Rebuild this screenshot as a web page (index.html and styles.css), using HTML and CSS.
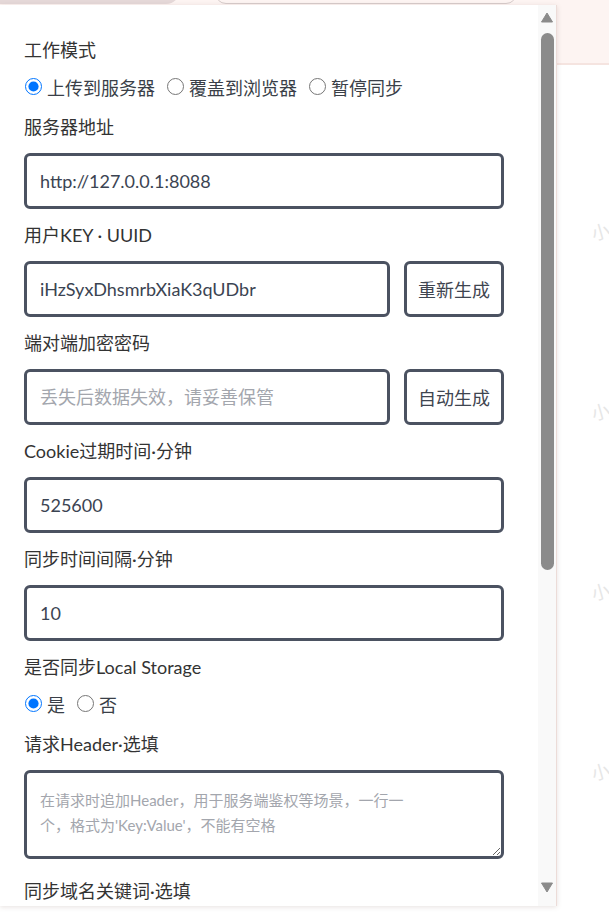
FILE: index.html
```html
<!DOCTYPE html>
<html lang="zh-CN">
<head>
  <meta charset="UTF-8" />
  <title>同步设置</title>
  <link rel="stylesheet" href="styles.css">
</head>
<body>
  <div class="page">
    <header class="top-bar">
      <div class="pill pill-filled"></div>
      <div class="pill pill-outline"></div>
    </header>

    <div class="watermarks">
      <div class="mark"><span class="mark-id"></span><span class="mark-name">小鱼</span></div>
      <div class="mark"><span class="mark-id"></span><span class="mark-name">小鱼</span></div>
      <div class="mark"><span class="mark-id"></span><span class="mark-name">小鱼</span></div>
      <div class="mark"><span class="mark-id"></span><span class="mark-name">小鱼</span></div>
      <div class="mark"><span class="mark-id"></span><span class="mark-name">小鱼</span></div>
      <div class="mark"><span class="mark-id"></span><span class="mark-name">小鱼</span></div>
      <div class="mark"><span class="mark-id"></span><span class="mark-name">小鱼</span></div>
      <div class="mark"><span class="mark-id"></span><span class="mark-name">小鱼</span></div>
      <div class="mark"><span class="mark-id"></span><span class="mark-name">小鱼</span></div>
      <div class="mark"><span class="mark-id"></span><span class="mark-name">小鱼</span></div>
      <div class="mark"><span class="mark-id"></span><span class="mark-name">小鱼</span></div>
      <div class="mark"><span class="mark-id"></span><span class="mark-name">小鱼</span></div>
      <div class="mark"><span class="mark-id"></span><span class="mark-name">小鱼</span></div>
      <div class="mark"><span class="mark-id"></span><span class="mark-name">小鱼</span></div>
      <div class="mark"><span class="mark-id"></span><span class="mark-name">小鱼</span></div>
      <div class="mark"><span class="mark-id"></span><span class="mark-name">小鱼</span></div>
      <div class="mark"><span class="mark-id">i623</span><span class="mark-name">小鱼</span></div>
      <div class="mark"><span class="mark-id">i623</span><span class="mark-name">小鱼</span></div>
      <div class="mark"><span class="mark-id">i623</span><span class="mark-name">小鱼</span></div>
      <div class="mark"><span class="mark-id"></span><span class="mark-name">小鱼</span></div>
    </div>

    <div class="popup">
      <form class="popup-body">
        <div class="field-label">工作模式</div>
        <div class="radio-row">
          <label class="radio"><input type="radio" name="mode" checked> 上传到服务器</label>
          <label class="radio"><input type="radio" name="mode"> 覆盖到浏览器</label>
          <label class="radio"><input type="radio" name="mode"> 暂停同步</label>
        </div>

        <div class="field-label">服务器地址</div>
        <input class="text-input" type="text" value="http://127.0.0.1:8088">

        <div class="field-label">用户KEY · UUID</div>
        <div class="input-row">
          <input class="text-input" type="text" value="iHzSyxDhsmrbXiaK3qUDbr">
          <button type="button" class="side-button">重新生成</button>
        </div>

        <div class="field-label">端对端加密密码</div>
        <div class="input-row">
          <input class="text-input" type="text" placeholder="丢失后数据失效，请妥善保管">
          <button type="button" class="side-button">自动生成</button>
        </div>

        <div class="field-label">Cookie过期时间·分钟</div>
        <input class="text-input" type="text" value="525600">

        <div class="field-label">同步时间间隔·分钟</div>
        <input class="text-input" type="text" value="10">

        <div class="field-label">是否同步Local Storage</div>
        <div class="radio-row">
          <label class="radio"><input type="radio" name="storage" checked> 是</label>
          <label class="radio"><input type="radio" name="storage"> 否</label>
        </div>

        <div class="field-label">请求Header·选填</div>
        <textarea class="text-area" placeholder="在请求时追加Header，用于服务端鉴权等场景，一行一&#10;个，格式为'Key:Value'，不能有空格"></textarea>

        <div class="field-label last-label">同步域名关键词·选填</div>
      </form>

      <div class="scrollbar">
        <svg class="arrow" width="12" height="11" viewBox="0 0 12 11"><path d="M6 1 L11.5 10 H0.5 Z" fill="#8b8b8b" stroke="#8b8b8b" stroke-linejoin="round"/></svg>
        <div class="thumb"></div>
        <svg class="arrow arrow-down" width="12" height="11" viewBox="0 0 12 11"><path d="M0.5 1 H11.5 L6 10 Z" fill="#8b8b8b" stroke="#8b8b8b" stroke-linejoin="round"/></svg>
      </div>
    </div>
  </div>
</body>
</html>
```

FILE: styles.css
```css
body {
  margin: 0;
  background-color: #fff;
  font-family: Lato, "Noto Sans CJK SC", sans-serif;
}

.page {
  position: relative;
  width: 609px;
  height: 922px;
  overflow: hidden;
}

/* page behind the popup */
.top-bar {
  height: 63px;
  background-color: #fdf4f2;
  border-bottom: 2px solid #f5e4e0;
  display: flex;
  align-items: flex-start;
  gap: 35px;
}

.pill {
  height: 20px;
  margin-top: -16px;
}

.pill-filled {
  width: 180px;
  background-color: #e5d8d8;
  border-radius: 0 0 14px 0;
}

.pill-outline {
  width: 300px;
  border: 1px solid #d6cbca;
  border-radius: 14px;
  margin-top: -18px;
}

.watermarks {
  display: grid;
  grid-template-columns: repeat(3, 195px) 1fr;
  grid-auto-rows: 180px;
  color: #e6e6e6;
  font-size: 20px;
  line-height: 24px;
}

.mark {
  display: flex;
  flex-direction: column;
  padding-top: 116px;
}

.mark-id {
  display: block;
  height: 24px;
  margin-left: -12px;
  transform: rotate(-16deg);
}

.mark-name {
  margin-top: 12px;
  margin-left: 6px;
  font-size: 18px;
  white-space: nowrap;
  transform: rotate(-16deg);
}

/* popup */
.popup {
  position: absolute;
  top: 5px;
  left: 0;
  width: 556px;
  height: 901px;
  display: flex;
  background-color: #fff;
  border-right: 1px solid #ecdcd8;
  box-shadow: 0 1px 5px rgba(120, 90, 80, 0.18);
}

.popup-body {
  flex: 1;
  overflow: hidden;
  padding: 32px 0 0 24px;
  display: flex;
  flex-direction: column;
  align-items: flex-start;
  gap: 13px;
  color: #333;
  font-size: 18px;
}

.field-label {
  line-height: 26px;
  white-space: nowrap;
}

.last-label {
  margin-top: 6px;
}

.radio-row {
  display: flex;
  align-items: center;
  gap: 11px;
  height: 25px;
  color: #3a3f48;
}

.radio {
  display: flex;
  align-items: center;
  gap: 5px;
  line-height: 25px;
  white-space: nowrap;
}

.radio input {
  width: 17px;
  height: 17px;
  margin: -4px 0 0 1px;
  accent-color: #0075ff;
}

.text-input,
.side-button,
.text-area {
  box-sizing: border-box;
  border: 3px solid #4b5261;
  border-radius: 6px;
  background-color: #fff;
  color: #3b4452;
  font-family: inherit;
  font-size: 18px;
  outline: none;
}

.text-input {
  width: 480px;
  height: 56px;
  padding: 0 13px;
}

.input-row {
  display: flex;
  gap: 14px;
}

.input-row .text-input {
  width: 366px;
}

.side-button {
  width: 100px;
  height: 56px;
  padding: 0;
  color: #3f4550;
}

.text-input::placeholder,
.text-area::placeholder {
  color: #a3a6ad;
}

.text-area {
  width: 480px;
  height: 89px;
  padding: 15px 13px;
  font-size: 15px;
  line-height: 25px;
  resize: vertical;
}

.scrollbar {
  width: 18px;
  flex-shrink: 0;
  background-color: #f9f9f9;
  display: flex;
  flex-direction: column;
  align-items: center;
  padding: 7px 0 13px;
  box-sizing: border-box;
}

.arrow {
  display: block;
}

.thumb {
  width: 13px;
  height: 537px;
  margin-top: 10px;
  border-radius: 7px;
  background-color: #8b8b8b;
}

.arrow-down {
  margin-top: auto;
}
```
